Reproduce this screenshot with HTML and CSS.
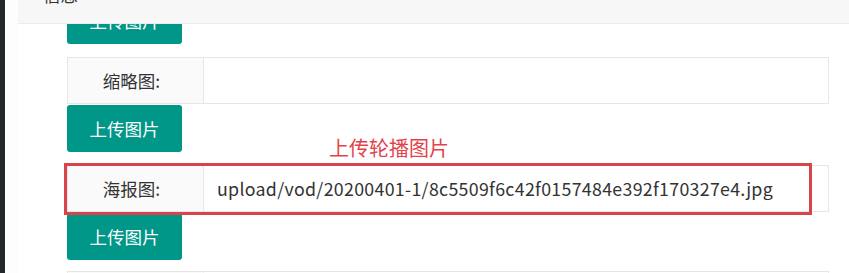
FILE: index.html
```html
<!DOCTYPE html>
<html lang="zh-CN">
<head>
<meta charset="utf-8">
<title>信息</title>
<link rel="stylesheet" href="styles.css">
</head>
<body>
<div class="layout">
  <aside class="side"></aside>
  <main class="main">
    <section class="card">
      <div class="card-header"><span class="card-title">信息</span></div>
      <div class="card-body">
        <button class="upload-btn">上传图片</button>
        <div class="field">
          <label class="field-label">缩略图:</label>
          <div class="field-input"></div>
        </div>
        <button class="upload-btn">上传图片</button>
        <div class="field field-marked">
          <label class="field-label">海报图:</label>
          <div class="field-input">upload/vod/20200401-1/8c5509f6c42f0157484e392f170327e4.jpg</div>
          <span class="note">上传轮播图片</span>
          <span class="mark"></span>
        </div>
        <button class="upload-btn">上传图片</button>
        <div class="field field-last">
          <label class="field-label"></label>
          <div class="field-input"></div>
        </div>
      </div>
    </section>
  </main>
</div>
</body>
</html>
```

FILE: styles.css
```css
html, body {
  margin: 0;
  padding: 0;
  background: #ffffff;
  overflow: hidden;
}
body {
  font-family: "Noto Sans CJK SC", "Microsoft YaHei", sans-serif;
  color: #333333;
  width: 849px;
  height: 273px;
}
.layout {
  display: flex;
  height: 273px;
}
.side {
  width: 5px;
  flex: none;
  background: #24262d;
}
.main {
  flex: 1;
  padding-left: 13px;
  background: #fdfdfd;
}
.card {
  position: relative;
  background: #ffffff;
  height: 273px;
  overflow: hidden;
}
.card-header {
  position: absolute;
  top: 0;
  left: 0;
  right: 0;
  height: 23px;
  background: #f7f7f7;
  border-bottom: 1px solid #ececec;
  overflow: hidden;
  z-index: 2;
}
.card-title {
  display: block;
  margin: -15px 0 0 25px;
  font-size: 17.5px;
  line-height: 20px;
  color: #333333;
}
.card-body {
  display: flex;
  flex-direction: column;
  align-items: flex-start;
  padding: 0 20px 0 49px;
  margin-top: -3px;
}
.upload-btn {
  display: block;
  width: 115px;
  height: 47px;
  margin: 1px 0 0 0;
  padding: 0;
  border: none;
  border-radius: 3px;
  background: #009688;
  color: #ffffff;
  font-family: "Noto Sans CJK SC", "Microsoft YaHei", sans-serif;
  font-size: 17.5px;
  line-height: 47px;
  text-align: center;
}
.card-body > .upload-btn:first-child {
  margin-top: 0;
}
.field {
  position: relative;
  display: flex;
  align-self: stretch;
  height: 47px;
  margin-top: 13px;
  border: 1px solid #e6e6e6;
  box-sizing: border-box;
}
.field-last {
  margin-top: 11px;
}
.field-label {
  width: 136px;
  flex: none;
  background: #fafafa;
  border-right: 1px solid #e6e6e6;
  font-size: 17.5px;
  line-height: 45px;
  text-align: center;
  padding-right: 8px;
  box-sizing: border-box;
}
.field-last .field-label {
  border-right-color: #f2f2f2;
}
.field-input {
  flex: 1;
  padding-left: 13px;
  font-size: 17.8px;
  letter-spacing: 0.3px;
  line-height: 45px;
  color: #333333;
  white-space: nowrap;
}
.note {
  position: absolute;
  left: 261px;
  top: -30px;
  font-size: 20px;
  line-height: 24px;
  color: #e2434b;
}
.mark {
  position: absolute;
  left: -4px;
  top: -3px;
  width: 748px;
  height: 52px;
  border: 3px solid #d9434a;
  box-sizing: border-box;
}
```
